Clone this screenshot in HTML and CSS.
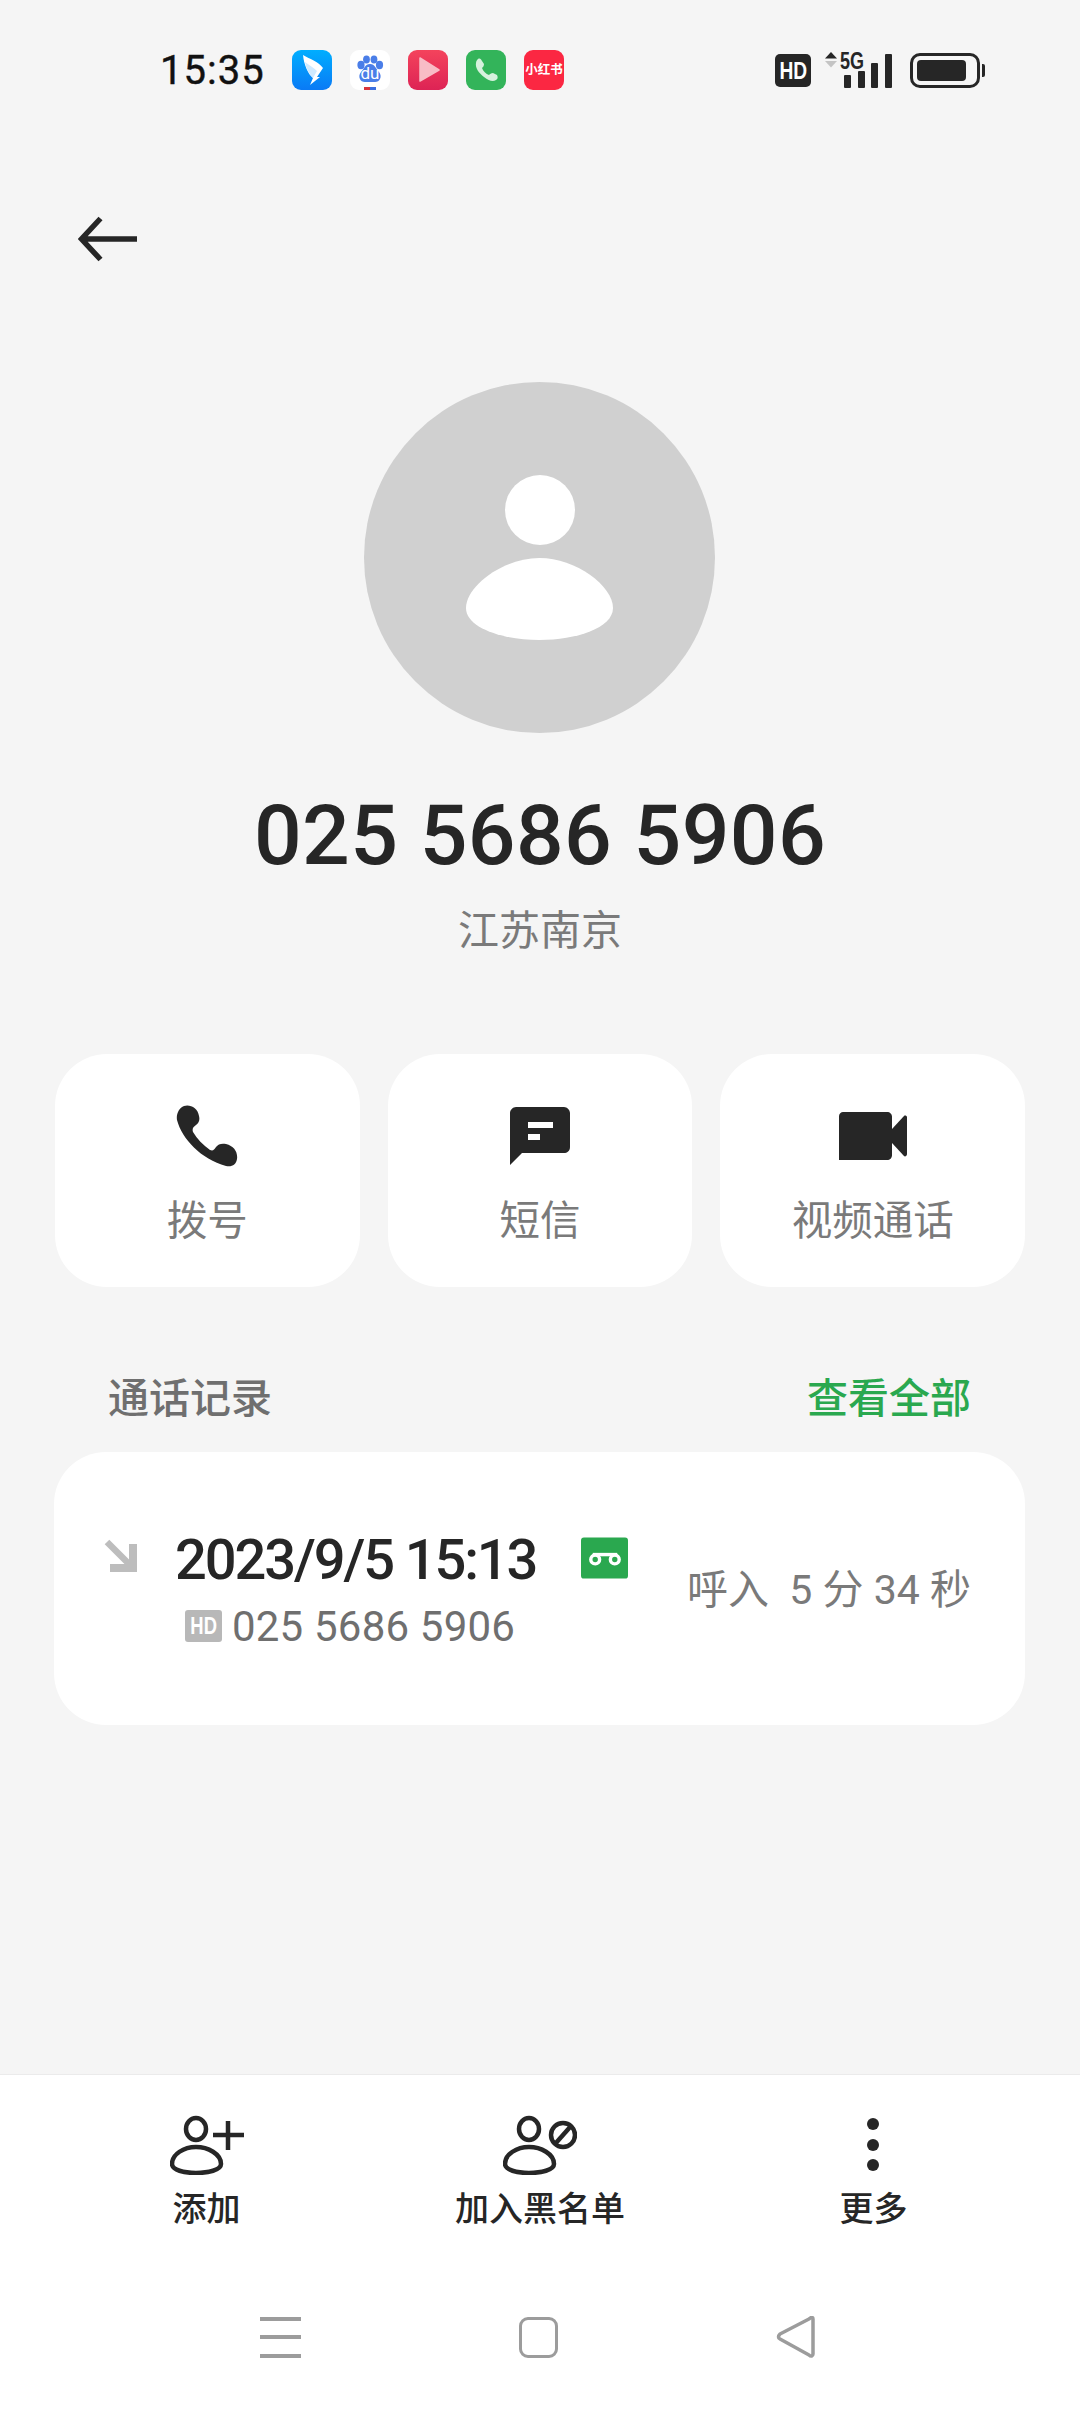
FILE: index.html
```html
<!DOCTYPE html>
<html lang="zh-CN">
<head>
  <meta charset="UTF-8" />
  <title>通话详情</title>
  <link rel="stylesheet" href="styles.css">
</head>
<body>
  <div class="page">
    <div class="status-bar">
      <div class="status-left">
        <span class="time">15:35</span>
        <div class="app-icons">
          <svg class="app" viewBox="0 0 40 40"><defs><linearGradient id="dd" x1="0" y1="0" x2="0" y2="1"><stop offset="0" stop-color="#00aeff"/><stop offset="1" stop-color="#0a7af5"/></linearGradient></defs><rect width="40" height="40" rx="9" fill="url(#dd)"/><path d="M11 5 C18 9 27 12 31 18 L25 27 L28 27 L18 35 L21 28 C16 24 12 15 11 5Z" fill="#fff"/><path d="M13 12 C17 15 22 18 25 21 L21 28 C17 24 14 18 13 12Z" fill="#cfeaff"/></svg>
          <div class="app app-baidu">
            <svg viewBox="0 0 40 40"><rect width="40" height="40" rx="9" fill="#fff"/><ellipse cx="11" cy="15" rx="3.6" ry="4.2" fill="#4a7ee8"/><ellipse cx="16.5" cy="9.5" rx="3.4" ry="4" fill="#4a7ee8"/><ellipse cx="24" cy="9.5" rx="3.4" ry="4" fill="#4a7ee8"/><ellipse cx="29.5" cy="15" rx="3.6" ry="4.2" fill="#4a7ee8"/><path d="M20 14 C25 14 26 19 29 22 C33 27 29 33 24 32 L16 32 C11 33 7 27 11 22 C14 19 15 14 20 14Z" fill="#4a7ee8"/><rect x="14" y="37" width="6" height="3" fill="#d9343a"/><rect x="20" y="37" width="6" height="3" fill="#3a6fe0"/></svg>
            <span class="du">du</span>
          </div>
          <svg class="app" viewBox="0 0 40 40"><defs><linearGradient id="pl" x1="0" y1="0" x2="0" y2="1"><stop offset="0" stop-color="#f4435c"/><stop offset="1" stop-color="#dd2355"/></linearGradient></defs><rect width="40" height="40" rx="9" fill="url(#pl)"/><path d="M12 8 L31 20 L12 31Z" fill="#f8bcc6" stroke="#f8bcc6" stroke-width="1.5" stroke-linejoin="round"/></svg>
          <svg class="app" viewBox="0 0 40 40"><rect width="40" height="40" rx="9" fill="#33b45a"/><path d="M12 9 C14 8 15 9 16 11 L18 14 C18 16 17 17 16 18 C17 21 20 24 23 25 C24 24 25 23 27 23 L31 25 C32 27 32 29 30 30 C27 32 23 31 18 27 C13 23 9 18 10 13 C10 11 11 10 12 9Z" fill="#d6f1dd"/></svg>
          <div class="app app-red">小红书</div>
        </div>
      </div>
      <div class="status-right">
        <span class="hd-badge"><span class="narrow">HD</span></span>
        <div class="signal">
          <svg class="signal-arrows" viewBox="0 0 12 16"><path d="M6 0 L12 6.5 L0 6.5Z" fill="#262626"/><path d="M0 9 L12 9 L6 15.5Z" fill="#c4c4c4"/></svg>
          <span class="five-g">5G</span>
          <div class="bars">
            <i class="bar b1"></i><i class="bar b2"></i><i class="bar b3"></i><i class="bar b4"></i>
          </div>
        </div>
        <div class="battery"><div class="battery-fill"></div></div>
        <div class="battery-tip"></div>
      </div>
    </div>

    <svg class="back" viewBox="0 0 60 46"><path d="M22.5 2.5 L3.5 23 L22.5 43.5 M3.5 23 L59 23" fill="none" stroke="#262626" stroke-width="5.5"/></svg>

    <div class="avatar">
      <div class="avatar-head"></div>
      <svg class="avatar-body" viewBox="0 0 147 82"><path d="M73.5 0 C110 0 147 28 147 50 C147 70 110 82 73.5 82 C37 82 0 70 0 50 C0 28 37 0 73.5 0Z" fill="#fff"/></svg>
    </div>

    <div class="number">025 5686 5906</div>
    <div class="location">江苏南京</div>

    <div class="actions">
      <div class="action">
        <div class="action-icon">
          <svg width="62" height="62" viewBox="0 0 62 62"><path d="M8 1 C14 -1 22 3 23 11 C24 15 23 18 20 20 C17 22 16 24 17 27 C21 34 27 40 34 45 C37 46 38 45 40 42 C42 39 46 38 50 39 C58 41 62 47 61 54 C60 60 56 62 50 61 C25 54 6 34 1 15 C0 9 3 3 8 1Z" fill="#262626"/></svg>
        </div>
        <span>拨号</span>
      </div>
      <div class="action">
        <div class="action-icon">
          <svg width="60" height="58" viewBox="0 0 60 58"><path d="M6 0 L54 0 C57 0 60 3 60 6 L60 40 C60 44 57 46 54 46 L12 46 L0 58 L0 6 C0 3 3 0 6 0Z" fill="#262626"/><rect x="18" y="15" width="25" height="6" fill="#fff"/><rect x="18" y="27" width="12" height="6" fill="#fff"/></svg>
        </div>
        <span>短信</span>
      </div>
      <div class="action">
        <div class="action-icon">
          <svg width="68" height="48" viewBox="0 0 68 48"><path d="M0 4 C0 2 2 0 4 0 L48 0 C51 0 53 2 53 5 L53 43 C53 46 51 48 48 48 L0 48Z" fill="#262626"/><path d="M53 17 L65 4 C66 3 68 4 68 5 L68 42 C68 44 66 45 65 44 L53 31Z" fill="#262626"/></svg>
        </div>
        <span>视频通话</span>
      </div>
    </div>

    <div class="section-head">
      <span>通话记录</span>
      <span class="see-all">查看全部</span>
    </div>

    <div class="record">
      <svg class="record-arrow" width="35" height="34" viewBox="0 0 35 34"><path d="M3 3 L28 28" fill="none" stroke="#bdbdbd" stroke-width="6.5"/><path d="M29 5 L29 29 L6 29" fill="none" stroke="#bdbdbd" stroke-width="8"/></svg>
      <div class="record-main">
        <div class="record-date">
          <span>2023/9/5 15:13</span>
          <svg class="voicemail" width="47" height="42" viewBox="0 0 48 42"><rect width="48" height="42" rx="3" fill="#2aa84f"/><circle cx="14.5" cy="22.5" r="4.5" fill="none" stroke="#fff" stroke-width="3.5"/><circle cx="34.5" cy="22.5" r="4.5" fill="none" stroke="#fff" stroke-width="3.5"/><path d="M12 17.5 L37 17.5" stroke="#fff" stroke-width="3.5"/></svg>
        </div>
        <div class="record-sub">
          <span class="hd-small"><span class="narrow">HD</span></span>
          <span>025 5686 5906</span>
        </div>
      </div>
      <div class="record-info">呼入&nbsp;&nbsp;5 分 34 秒</div>
    </div>

    <div class="bottom">
      <div class="tabs">
        <div class="tab">
          <svg width="74" height="60" viewBox="0 0 74 60"><g fill="none" stroke="#262626" stroke-width="4.5"><ellipse cx="26" cy="14" rx="10" ry="11"/><path d="M26 32 C38 32 51 39 51 49 C51 55 38 58 26 58 C14 58 2 55 2 49 C2 39 14 32 26 32Z"/><path d="M43 20 L74 20 M58 6 L58 35"/></g></svg>
          <span>添加</span>
        </div>
        <div class="tab">
          <svg width="74" height="60" viewBox="0 0 74 60"><g fill="none" stroke="#262626" stroke-width="4.5"><ellipse cx="26" cy="14" rx="10" ry="11"/><path d="M26 32 C38 32 51 39 51 49 C51 55 38 58 26 58 C14 58 2 55 2 49 C2 39 14 32 26 32Z"/><circle cx="60" cy="20" r="12"/><path d="M52 29 L68 11"/></g></svg>
          <span>加入黑名单</span>
        </div>
        <div class="tab">
          <svg width="74" height="60" viewBox="0 0 74 60"><g fill="#262626"><circle cx="36" cy="9" r="6"/><circle cx="36" cy="30" r="6"/><circle cx="36" cy="50" r="6"/></g></svg>
          <span>更多</span>
        </div>
      </div>
      <div class="nav-bar">
        <div class="nav-menu"><i></i><i></i><i></i></div>
        <div class="nav-home"></div>
        <svg class="nav-back" width="40" height="42" viewBox="0 0 40 42"><path d="M37 3 L37 38 C37 40 35 41 33 39 L4 23 C2 22 2 20 4 18 L33 3 C35 1 37 1 37 3Z" fill="none" stroke="#9c9c9c" stroke-width="3.5" stroke-linejoin="round"/></svg>
      </div>
    </div>
  </div>
</body>
</html>
```

FILE: styles.css
```css
* {
  box-sizing: border-box;
}
body {
  margin: 0;
  font-family: Roboto, "Noto Sans CJK SC", sans-serif;
  background-color: #f5f5f5;
  color: #262626;
}
.page {
  width: 1080px;
  height: 2412px;
  display: flex;
  flex-direction: column;
  overflow: hidden;
}

/* status bar */
.status-bar {
  height: 140px;
  flex: none;
  display: flex;
  align-items: center;
  justify-content: space-between;
  padding: 0 95px 0 160px;
}
.status-left {
  display: flex;
  align-items: center;
}
.time {
  font-size: 40px;
  letter-spacing: 1px;
  color: #111;
  width: 132px;
  -webkit-text-stroke: 0.4px #111;
}
.app-icons {
  display: flex;
  gap: 18px;
}
.app {
  width: 40px;
  height: 40px;
  display: block;
}
.app-baidu {
  position: relative;
}
.app-baidu svg {
  display: block;
}
.du {
  position: absolute;
  left: 0;
  right: 0;
  top: 13px;
  text-align: center;
  font-size: 17px;
  line-height: 20px;
  color: #fff;
}
.app-red {
  background-color: #fb2742;
  border-radius: 9px;
  color: #fff;
  font-size: 12.5px;
  font-weight: 700;
  text-align: center;
  line-height: 40px;
  white-space: nowrap;
}
.status-right {
  display: flex;
  align-items: center;
}
.narrow {
  display: inline-block;
  transform: scaleX(0.8);
}
.hd-badge {
  width: 36px;
  height: 33px;
  background-color: #262626;
  color: #fff;
  border-radius: 5px;
  font-family: "Liberation Sans", sans-serif;
  font-size: 24px;
  font-weight: 700;
  line-height: 33px;
  text-align: center;
}
.signal {
  width: 67px;
  height: 36px;
  margin-left: 14px;
  position: relative;
}
.signal-arrows {
  position: absolute;
  left: 0;
  top: 0;
  width: 12px;
  height: 16px;
}
.five-g {
  position: absolute;
  left: 15px;
  top: -3px;
  font-family: "Liberation Sans", sans-serif;
  font-size: 24px;
  font-weight: 700;
  line-height: 24px;
  transform: scaleX(0.75);
  transform-origin: left;
}
.bars {
  position: absolute;
  left: 19px;
  bottom: 0;
  display: flex;
  align-items: flex-end;
  gap: 6.5px;
}
.bar {
  width: 7px;
  border-radius: 1px;
  background-color: #262626;
  display: block;
}
.b1 { height: 13px; }
.b2 { height: 17px; }
.b3 { height: 25px; }
.b4 { height: 34px; }
.battery {
  width: 70px;
  height: 35px;
  margin-left: 18px;
  border: 3px solid #262626;
  border-radius: 10px;
  padding: 4px;
}
.battery-fill {
  width: 49px;
  height: 100%;
  background-color: #262626;
  border-radius: 4px;
}
.battery-tip {
  width: 3px;
  height: 13px;
  margin-left: 2px;
  background-color: #262626;
  border-radius: 0 2px 2px 0;
}

/* header */
.back {
  width: 60px;
  height: 46px;
  flex: none;
  margin: 76px 0 0 78px;
}
.avatar {
  width: 351px;
  height: 351px;
  flex: none;
  margin: 120px 0 0 364px;
  border-radius: 50%;
  background-color: #d0d0d0;
  display: flex;
  flex-direction: column;
  align-items: center;
}
.avatar-head {
  width: 70px;
  height: 70px;
  margin-top: 93px;
  border-radius: 50%;
  background-color: #fff;
}
.avatar-body {
  width: 147px;
  height: 82px;
  margin-top: 13px;
}
.number {
  margin-top: 53px;
  font-size: 84px;
  font-weight: 500;
  letter-spacing: 0.4px;
  line-height: 100px;
  text-align: center;
}
.location {
  margin-top: 20px;
  font-size: 41px;
  line-height: 50px;
  text-align: center;
  color: #7a7a7a;
}

/* buttons */
.actions {
  margin: 98px 55px 0;
  display: grid;
  grid-template-columns: repeat(3, 1fr);
  gap: 28px;
}
.action {
  height: 233px;
  background-color: #fff;
  border-radius: 52px;
  display: flex;
  flex-direction: column;
  align-items: center;
  padding-top: 51px;
  font-size: 40.5px;
  line-height: 50px;
  color: #7a7a7a;
}
.action-icon {
  height: 62px;
  margin-bottom: 29px;
  display: flex;
  align-items: center;
}

/* call log */
.section-head {
  margin: 87px 109px 0 108px;
  display: flex;
  justify-content: space-between;
  font-size: 41px;
  font-weight: 500;
  line-height: 50px;
  color: #6f6f6f;
}
.see-all {
  color: #2aa84f;
}
.record {
  height: 273px;
  margin: 28px 55px 0 54px;
  padding: 78px 54px 0 50px;
  background-color: #fff;
  border-radius: 52px;
  display: flex;
  align-items: flex-start;
}
.record-arrow {
  margin-top: 9px;
  margin-right: 36px;
}
.record-date {
  display: flex;
  align-items: center;
  height: 60px;
  font-size: 56px;
  font-weight: 500;
  letter-spacing: -2.1px;
}
.voicemail {
  margin-left: 45px;
  margin-bottom: 4px;
}
.record-sub {
  display: flex;
  align-items: center;
  margin-top: 11px;
  padding-left: 10px;
  height: 50px;
  font-size: 42px;
  letter-spacing: 0.2px;
  color: #6f6f6f;
}
.hd-small {
  width: 37px;
  height: 32px;
  margin-right: 10px;
  background-color: #b8b8b8;
  color: #fff;
  border-radius: 3px;
  font-family: "Liberation Sans", sans-serif;
  font-size: 23px;
  font-weight: 700;
  line-height: 32px;
  text-align: center;
}
.record-info {
  margin-left: auto;
  margin-top: 35px;
  font-size: 41px;
  line-height: 50px;
  color: #7a7a7a;
  white-space: nowrap;
}

/* bottom bar */
.bottom {
  margin-top: auto;
  height: 338px;
  background-color: #fff;
  border-top: 1px solid #ebebeb;
  padding-top: 40px;
}
.tabs {
  display: flex;
  justify-content: space-between;
  padding: 0 40px;
}
.tab {
  width: 333px;
  display: flex;
  flex-direction: column;
  align-items: center;
  font-size: 34px;
  font-weight: 500;
  line-height: 44px;
  gap: 12px;
}
.nav-bar {
  margin-top: 85px;
  display: flex;
  align-items: center;
  justify-content: space-between;
  padding: 0 264px 0 260px;
}
.nav-menu {
  width: 41px;
  height: 41px;
  display: flex;
  flex-direction: column;
  justify-content: space-between;
}
.nav-menu i {
  display: block;
  height: 4px;
  background-color: #9c9c9c;
}
.nav-home {
  width: 39px;
  height: 41px;
  border: 3.5px solid #9c9c9c;
  border-radius: 9px;
}
```
